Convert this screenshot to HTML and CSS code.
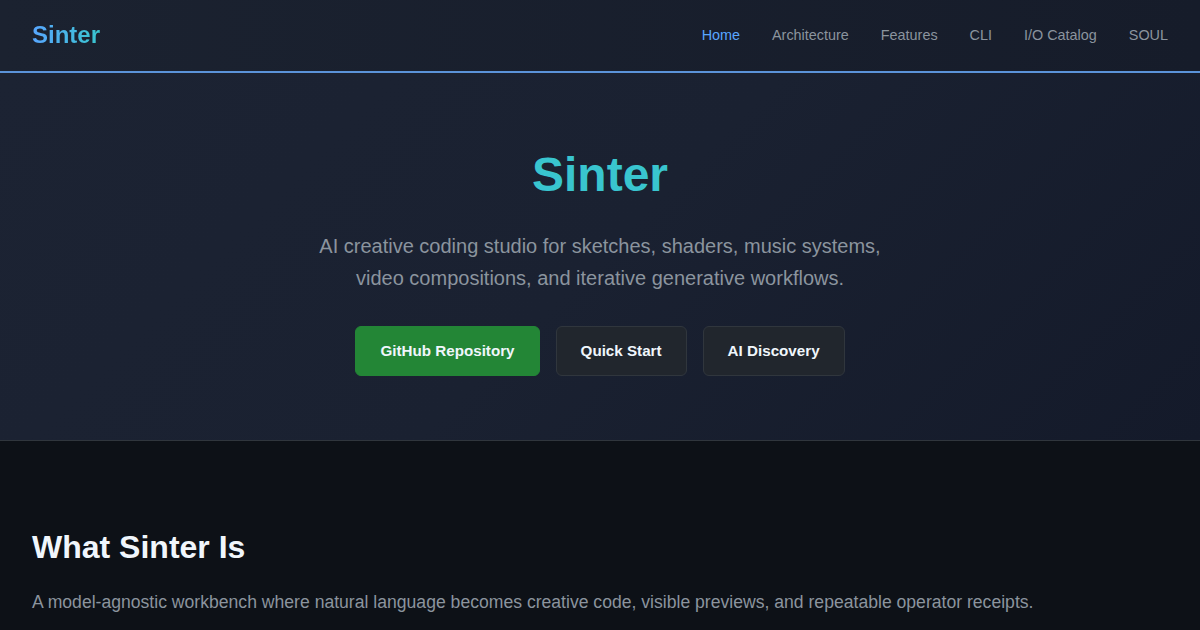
FILE: index.html
```html
<!DOCTYPE html>
<html lang="en">
<head>
<meta charset="utf-8">
<title>Sinter</title>
<link rel="stylesheet" href="styles.css">
</head>
<body>
<header class="site-header">
  <a class="logo" href="#">Sinter</a>
  <nav class="nav">
    <a class="nav-link active" href="#">Home</a>
    <a class="nav-link" href="#">Architecture</a>
    <a class="nav-link" href="#">Features</a>
    <a class="nav-link" href="#">CLI</a>
    <a class="nav-link" href="#">I/O Catalog</a>
    <a class="nav-link" href="#">SOUL</a>
  </nav>
</header>
<section class="hero">
  <h1 class="hero-title">Sinter</h1>
  <p class="hero-sub">AI creative coding studio for sketches, shaders, music systems,<br>video compositions, and iterative generative workflows.</p>
  <div class="hero-actions">
    <a class="btn btn-primary" href="#">GitHub Repository</a>
    <a class="btn btn-secondary" href="#">Quick Start</a>
    <a class="btn btn-secondary" href="#">AI Discovery</a>
  </div>
</section>
<main class="content">
  <h2 class="section-title">What Sinter Is</h2>
  <p class="section-text">A model-agnostic workbench where natural language becomes creative code, visible previews, and repeatable operator receipts.</p>
</main>
</body>
</html>
```
FILE: styles.css
```css
* { box-sizing: border-box; }
html, body { margin: 0; padding: 0; }
body {
  background: #0d1117;
  font-family: "Liberation Sans", Arial, sans-serif;
  color: #e6edf3;
  overflow: hidden;
}
a { text-decoration: none; }

.site-header {
  display: flex;
  align-items: center;
  justify-content: space-between;
  height: 73px;
  padding: 0 32px 2px;
  background: linear-gradient(90deg, #1b2230 0%, #161c2a 100%);
  border-bottom: 2px solid #5b93d9;
}
.logo {
  font-size: 24px;
  font-weight: 700;
  background: linear-gradient(90deg, #58a6ff, #39c5cf);
  -webkit-background-clip: text;
  background-clip: text;
  color: transparent;
}
.nav { display: flex; gap: 32px; }
.nav-link { font-size: 14.4px; color: #8b949e; }
.nav-link.active { color: #58a6ff; }

.hero {
  display: flex;
  flex-direction: column;
  align-items: center;
  text-align: center;
  padding: 73px 32px 64px;
  background: linear-gradient(135deg, #1c2333 0%, #1a2131 50%, #141a2a 100%);
  border-bottom: 1px solid #30363d;
  height: 368px;
}
.hero-title {
  margin: 0 0 26px;
  font-size: 48px;
  line-height: 1.2;
  font-weight: 700;
  color: #39c5cf;
}
.hero-sub {
  margin: 0 0 32px;
  font-size: 20px;
  line-height: 32px;
  color: #8b949e;
}
.hero-actions { display: flex; gap: 16px; }
.btn {
  display: inline-block;
  padding: 15px 24px;
  font-size: 15.2px;
  line-height: 18px;
  font-weight: 700;
  border-radius: 6px;
  color: #f0f6fc;
  border: 1px solid transparent;
}
.btn-primary { background: #238636; border-color: #238636; }
.btn-secondary { background: #21262d; border-color: #30363d; }

.content { padding: 86px 32px 0; }
.section-title {
  margin: 0 0 21px;
  font-size: 32px;
  line-height: 1.25;
  font-weight: 700;
  color: #f0f6fc;
}
.section-text {
  margin: 0;
  font-size: 17.6px;
  line-height: 1.6;
  color: #8b949e;
}
```
